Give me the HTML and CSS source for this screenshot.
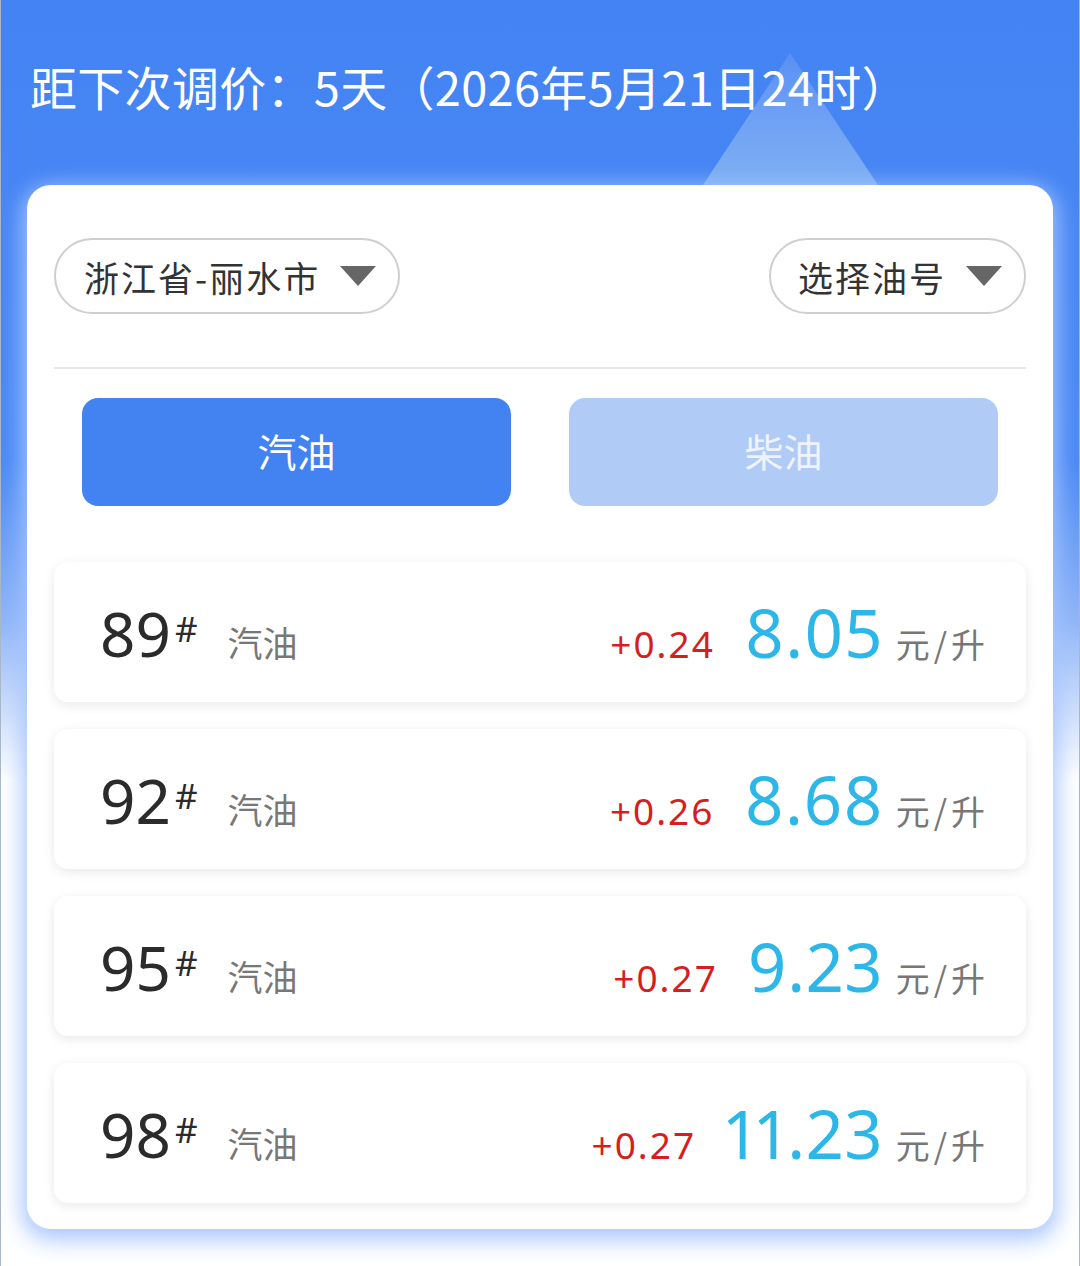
FILE: index.html
```html
<!DOCTYPE html>
<html lang="zh-CN">
<head>
<meta charset="utf-8">
<title>油价</title>
<link rel="stylesheet" href="styles.css">
</head>
<body>
<div class="page">
  <header class="header">
    <svg class="peak" width="180" height="132" viewBox="0 0 180 132">
      <defs>
        <linearGradient id="pk" x1="0" y1="0" x2="0" y2="1">
          <stop offset="0" stop-color="#ffffff" stop-opacity="0.10"/>
          <stop offset="1" stop-color="#c8e6f0" stop-opacity="0.42"/>
        </linearGradient>
      </defs>
      <polygon points="87,0 0,132 175,132" fill="url(#pk)"/>
    </svg>
    <h1 class="title">距下次调价：5天（2026年5月21日24时）</h1>
  </header>

  <main class="card">
    <div class="selects">
      <div class="pill pill-city"><span class="pill-text">浙江省-丽水市</span><span class="caret"></span></div>
      <div class="pill pill-oil"><span class="pill-text">选择油号</span><span class="caret"></span></div>
    </div>
    <div class="divider"></div>
    <div class="tabs">
      <div class="tab tab-active">汽油</div>
      <div class="tab tab-idle">柴油</div>
    </div>
    <div class="rows">
      <div class="row">
        <div class="left"><span class="grade">89<span class="hash">#</span></span><span class="kind">汽油</span></div>
        <div class="right"><span class="delta">+0.24</span><span class="price">8.05</span><span class="unit">元/升</span></div>
      </div>
      <div class="row">
        <div class="left"><span class="grade">92<span class="hash">#</span></span><span class="kind">汽油</span></div>
        <div class="right"><span class="delta">+0.26</span><span class="price">8.68</span><span class="unit">元/升</span></div>
      </div>
      <div class="row">
        <div class="left"><span class="grade">95<span class="hash">#</span></span><span class="kind">汽油</span></div>
        <div class="right"><span class="delta">+0.27</span><span class="price">9.23</span><span class="unit">元/升</span></div>
      </div>
      <div class="row">
        <div class="left"><span class="grade">98<span class="hash">#</span></span><span class="kind">汽油</span></div>
        <div class="right"><span class="delta">+0.27</span><span class="price">11.23</span><span class="unit">元/升</span></div>
      </div>
    </div>
  </main>
</div>
</body>
</html>
```

FILE: styles.css
```css
* { box-sizing: border-box; }
html, body { margin: 0; padding: 0; }
body {
  width: 1080px;
  height: 1266px;
  overflow: hidden;
  font-family: "Noto Sans CJK SC", "Noto Sans", sans-serif;
  background: linear-gradient(180deg, #4483f3 0px, #4a89f4 460px, #8fb5f7 620px, #ffffff 780px, #ffffff 100%);
}
.page {
  width: 1080px;
  height: 1266px;
  border-left: 1px solid #a9b6c9;
  border-right: 1px solid #a9b6c9;
}
.header {
  position: relative;
  height: 185px;
  padding: 58px 0 0 29px;
}
.peak {
  position: absolute;
  left: 702px;
  top: 53px;
}
.title {
  position: relative;
  margin: 0;
  font-size: 47px;
  font-weight: 400;
  line-height: 56px;
  color: #ffffff;
  letter-spacing: 0.3px;
}
.card {
  margin: 0 26px 0 26px;
  background: #ffffff;
  border-radius: 24px;
  padding: 53px 27px 26px 27px;
  box-shadow: 0 6px 22px 5px rgba(165, 196, 255, 0.95);
  position: relative;
}
.selects {
  display: flex;
  justify-content: space-between;
}
.pill {
  height: 76px;
  border: 2px solid #cfcfcf;
  border-radius: 38px;
  display: flex;
  align-items: center;
  color: #333333;
  font-size: 35px;
}
.pill-city { padding: 0 22px 0 28px; }
.pill-oil { padding: 0 22px 0 27px; }
.pill-text { letter-spacing: 2px; }
.caret {
  width: 0;
  height: 0;
  margin-left: 20px;
  border-left: 18px solid transparent;
  border-right: 18px solid transparent;
  border-top: 20px solid #666666;
}
.divider {
  height: 2px;
  background: #e6e6e6;
  margin-top: 53px;
}
.tabs {
  display: flex;
  gap: 58px;
  padding: 0 28px;
  margin-top: 29px;
}
.tab {
  flex: 1;
  height: 108px;
  border-radius: 16px;
  display: flex;
  align-items: center;
  justify-content: center;
  font-size: 39px;
  color: #ffffff;
  padding-bottom: 4px;
}
.tab-active { background: #4282f1; }
.tab-idle { background: #b0cbf6; color: #eef3fd; }
.rows {
  margin-top: 56px;
  display: flex;
  flex-direction: column;
  gap: 27px;
}
.row {
  height: 140px;
  border-radius: 14px;
  background: #ffffff;
  box-shadow: 0 3px 12px rgba(0, 0, 0, 0.09);
  display: flex;
  align-items: center;
  justify-content: space-between;
  padding: 4px 37px 0 46px;
}
.left, .right {
  display: flex;
  align-items: baseline;
}
.grade {
  font-family: "Noto Sans", "Roboto", sans-serif;
  font-size: 62px;
  color: #2b2b2b;
  line-height: 1;
}
.hash {
  font-size: 35px;
  vertical-align: 15px;
  margin-left: 4px;
}
.kind {
  margin-left: 30px;
  font-size: 35px;
  color: #777777;
}
.delta {
  font-family: "Noto Sans", "Roboto", sans-serif;
  font-size: 37px;
  color: #d71e1e;
  letter-spacing: 2px;
}
.price {
  margin-left: 30px;
  font-family: "Noto Sans", "Roboto", sans-serif;
  font-variant-numeric: proportional-nums;
  font-size: 67px;
  color: #2cb7e8;
  line-height: 1;
  letter-spacing: 1px;
}
.unit {
  margin-left: 12px;
  font-size: 34px;
  color: #777777;
  letter-spacing: 4px;
}
```
